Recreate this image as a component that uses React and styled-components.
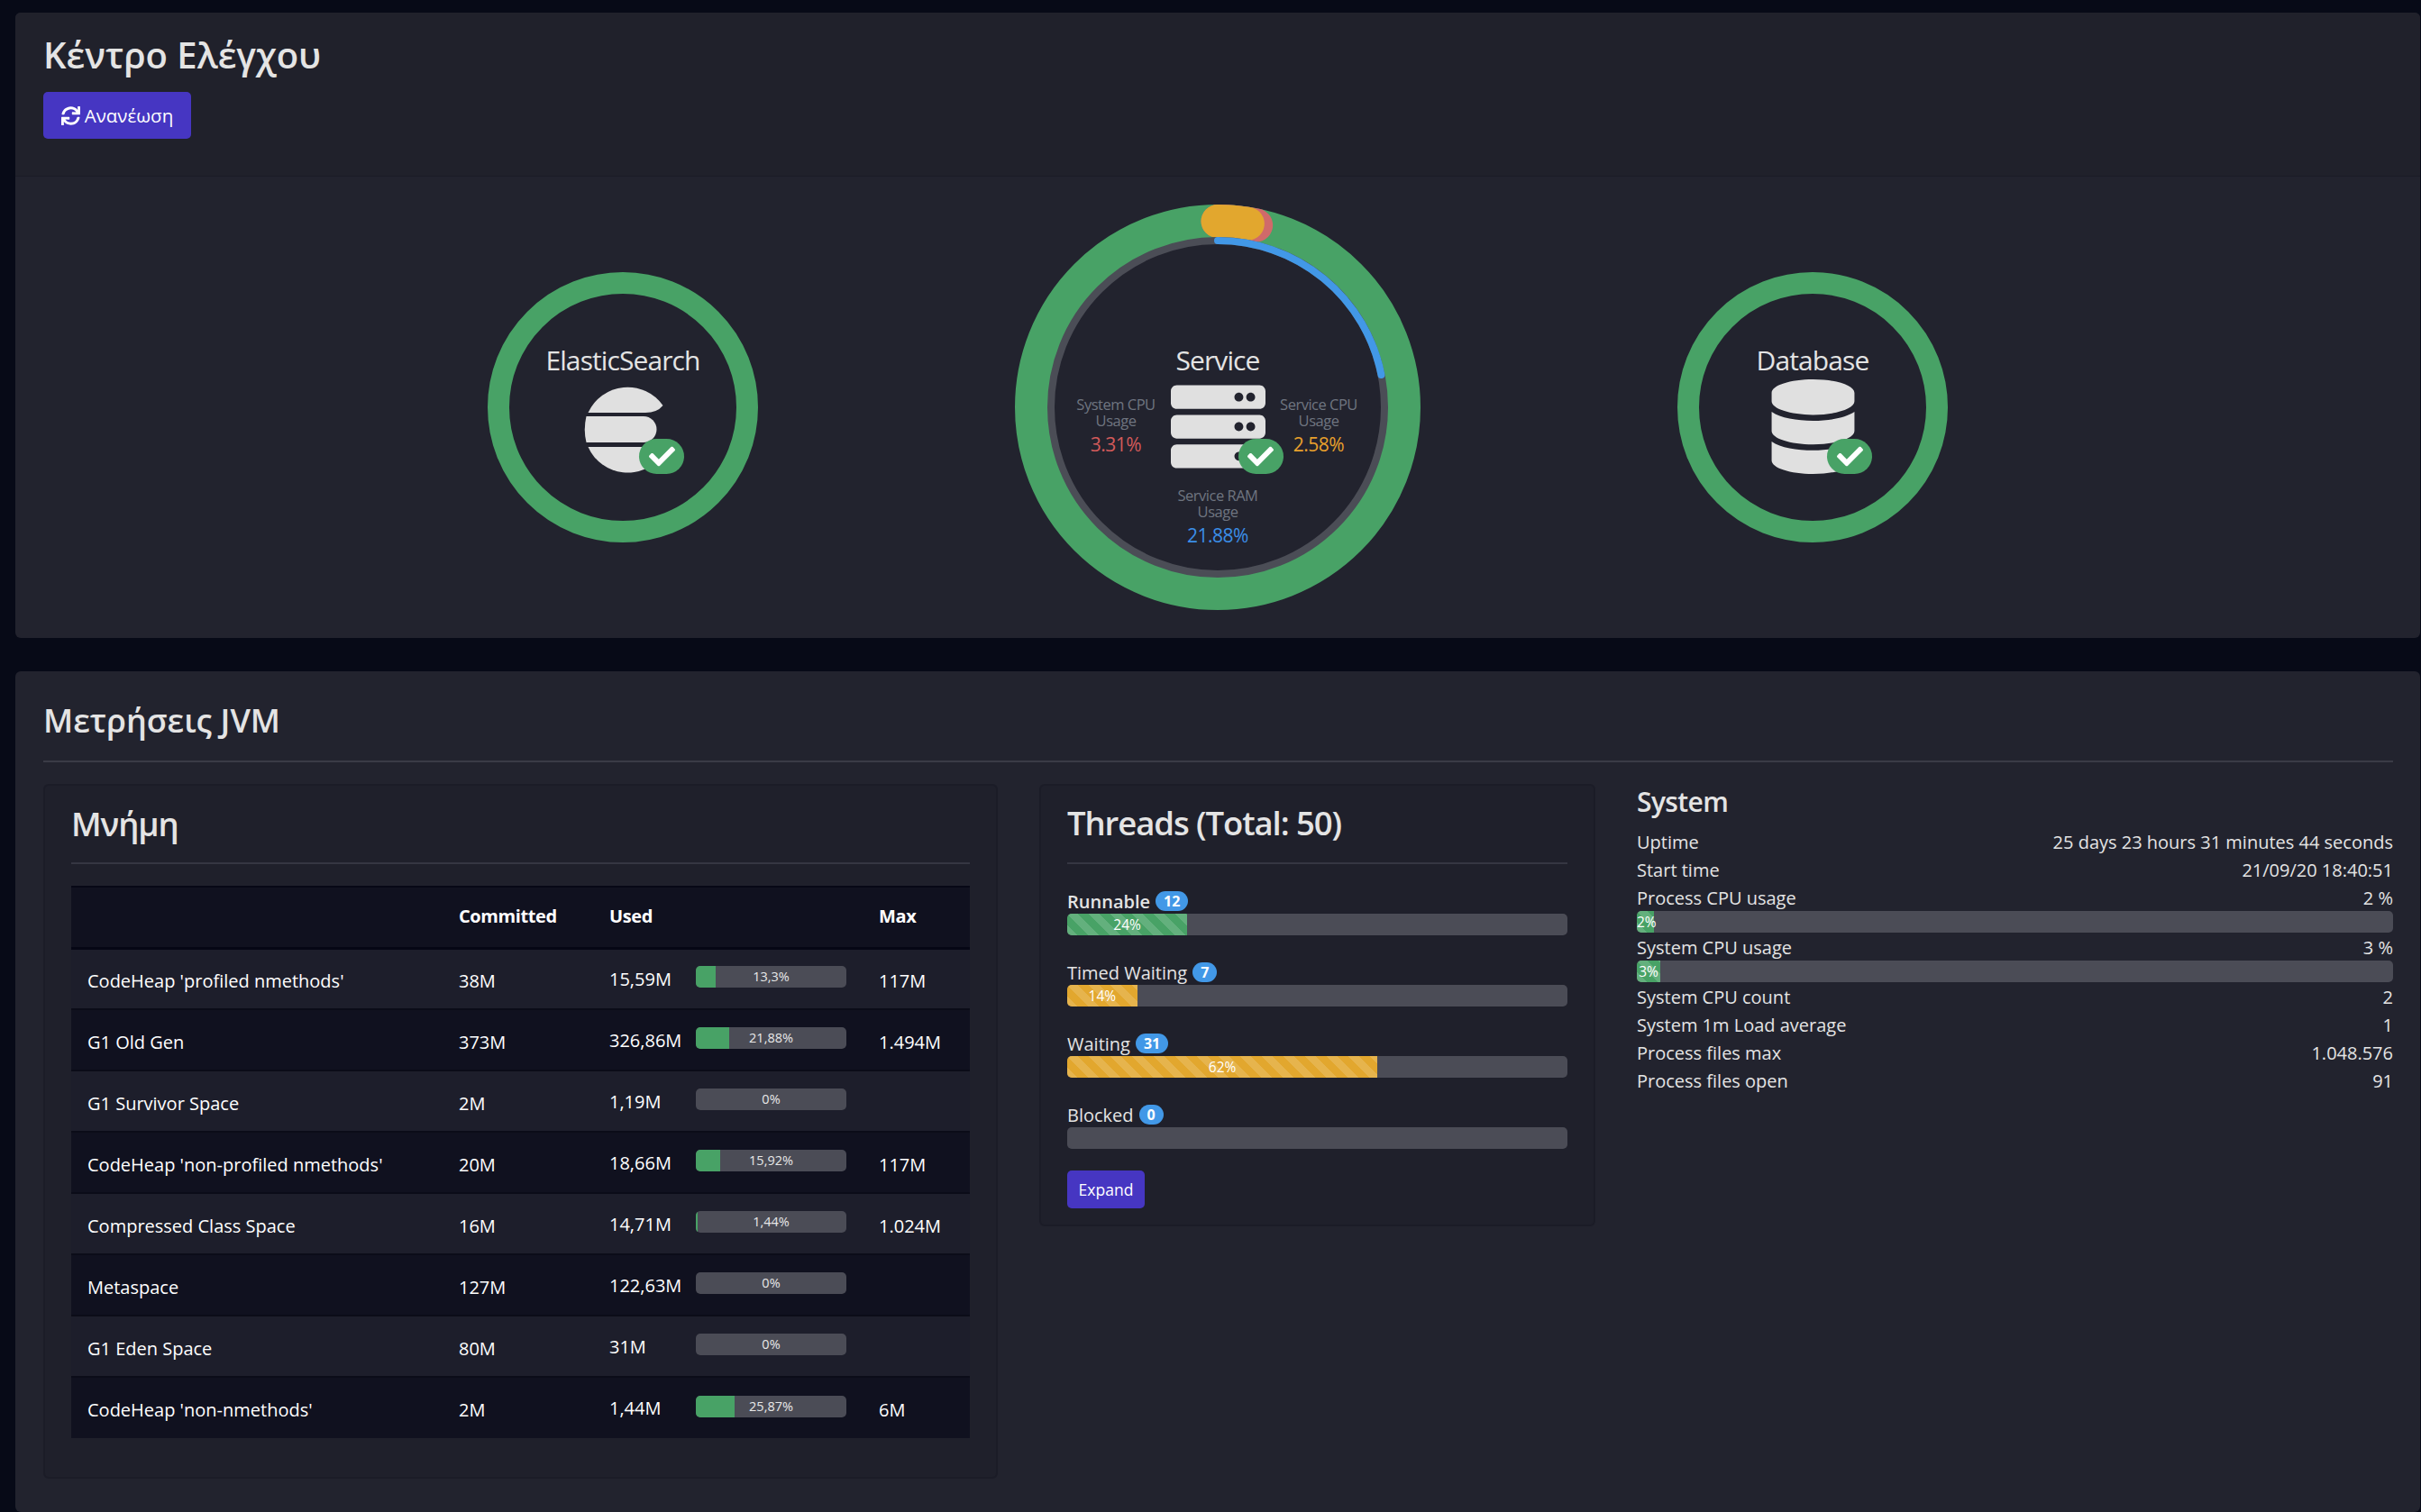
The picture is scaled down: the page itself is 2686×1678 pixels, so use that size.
import React from 'react';
import styled, { createGlobalStyle } from 'styled-components';
import { FaSync, FaServer, FaDatabase, FaCheck } from 'react-icons/fa';

const GREEN = '#48a266';
const ORANGE = '#e2a72e';
const BLUE = '#4298e7';

const GlobalStyle = createGlobalStyle`
  html, body { margin: 0; padding: 0; height: 100%; }
  body {
    background: #070a17;
    color: #e4e4e4;
    font-family: "Open Sans", "Noto Sans", sans-serif;
    font-size: 20px;
    overflow: hidden;
  }
  * { box-sizing: border-box; }
`;

const Page = styled.div`
  display: flex;
  flex-direction: column;
  gap: 37px;
  height: 100vh;
  padding: 14px 1px 0 17px;
`;

const Panel = styled.section`
  background: #22232e;
  border-radius: 6px;
  flex: ${(p) => (p.$grow ? '1' : 'none')};
  padding: ${(p) => p.$padding || '0'};
`;

const PanelHeader = styled.header`
  height: 182px;
  padding: 19px 31px 0;
  background: #20212b;
  border-bottom: 1px solid #1b1c26;
  border-radius: 6px 6px 0 0;
`;

const PageTitle = styled.h1`
  margin: 0 0 13px;
  font-size: 40px;
  line-height: 56px;
  font-weight: 600;
`;

const PrimaryButton = styled.button`
  display: inline-flex;
  align-items: center;
  justify-content: center;
  gap: ${(p) => p.$gap || 0}px;
  width: ${(p) => p.$w}px;
  height: ${(p) => p.$h}px;
  padding: 0;
  border: 0;
  border-radius: 5px;
  background: #4636c2;
  color: #fff;
  font-family: inherit;
  font-size: ${(p) => p.$size}px;
`;

const Rings = styled.div`
  display: flex;
  justify-content: center;
  align-items: center;
  gap: 285px;
  height: 512px;
`;

const Ring = styled.div`
  position: relative;
  width: ${(p) => p.$size}px;
  height: ${(p) => p.$size}px;
  flex: none;
`;

const RingSvg = styled.svg`
  display: block;
`;

const RingContent = styled.div`
  position: absolute;
  inset: 0;
  display: flex;
  flex-direction: column;
  align-items: center;
  justify-content: center;
  padding-top: 4px;
`;

const RingTitle = styled.div`
  font-size: 30px;
  line-height: 36px;
  letter-spacing: -0.03em;
  margin-bottom: 3px;
`;

const IconBox = styled.div`
  position: relative;
  height: 105px;
  color: #e0e0e0;
  svg { display: block; }
`;

const CheckBadge = styled.span`
  position: absolute;
  right: ${(p) => p.$right}px;
  bottom: 0;
  width: 50px;
  height: 39px;
  border-radius: 20px;
  background: ${GREEN};
  color: #fff;
  display: flex;
  align-items: center;
  justify-content: center;
  font-size: 29px;
`;

const Metric = styled.div`
  position: absolute;
  left: ${(p) => p.$left}px;
  top: ${(p) => p.$top}px;
  width: 120px;
  text-align: center;
  font-size: 16.5px;
  line-height: 18px;
  letter-spacing: -0.03em;
  color: #6f7580;
`;

const MetricValue = styled.div`
  margin-top: 5px;
  font-size: 21px;
  line-height: 24px;
  color: ${(p) => p.$color};
`;

const SectionTitle = styled.h2`
  margin: 0;
  padding-bottom: 19px;
  font-size: 36px;
  line-height: 50px;
  font-weight: 600;
  border-bottom: 2px solid #3a3b46;
`;

const Columns = styled.div`
  display: grid;
  grid-template-columns: 1059px 617px 1fr;
  gap: 46px;
  margin-top: 24px;
  align-items: start;
`;

const Card = styled.div`
  background: #1f202b;
  border: 2px solid #1b1c27;
  border-radius: 6px;
  padding: ${(p) => p.$padding};
`;

const CardTitle = styled.h3`
  margin: 0;
  padding-bottom: ${(p) => p.$gap}px;
  font-size: 36.5px;
  line-height: 56px;
  font-weight: 600;
  letter-spacing: -0.03em;
  border-bottom: 2px solid #353642;
`;

const Table = styled.table`
  width: 997px;
  margin-top: 24px;
  border-collapse: collapse;
  table-layout: fixed;
  color: #fff;
  border-top: 2px solid #070816;
`;

const Th = styled.th`
  height: 68px;
  padding: 0 0 2px 18px;
  width: ${(p) => p.$w}px;
  background: #10111f;
  border-bottom: 3px solid #060715;
  text-align: left;
  font-size: 20px;
  font-weight: 700;
  letter-spacing: -0.02em;
`;

const Tr = styled.tr`
  background: ${(p) => (p.$odd ? '#1d1e2b' : '#10111f')};
  border-bottom: 2px solid #0b0c18;
  &:last-child { border-bottom: 0; }
`;

const Td = styled.td`
  height: 68px;
  padding: 4px 0 0 18px;
  font-size: 20px;
  white-space: nowrap;
`;

const UsedCell = styled.div`
  display: flex;
  align-items: center;
  padding-bottom: 8px;
`;

const UsedValue = styled.span`
  width: 96px;
  flex: none;
  padding-top: 4px;
`;

const Track = styled.div`
  position: relative;
  display: flex;
  width: ${(p) => p.$w || '100%'};
  height: 24px;
  overflow: hidden;
  border-radius: 5px;
  background: #4b4c56;
`;

const MemoryFill = styled.div`
  position: absolute;
  top: 0;
  bottom: 0;
  left: 0;
  background: ${GREEN};
`;

const TrackLabel = styled.span`
  position: relative;
  flex: 1;
  text-align: center;
  font-size: 14.5px;
  line-height: 24px;
  color: #e8e8e8;
`;

const StripedFill = styled.div`
  height: 100%;
  text-align: center;
  font-size: 15.5px;
  line-height: 24px;
  color: #fff;
  background-color: ${(p) => p.$color};
  background-image: linear-gradient(45deg, rgba(255,255,255,.15) 25%, transparent 25%, transparent 50%, rgba(255,255,255,.15) 50%, rgba(255,255,255,.15) 75%, transparent 75%, transparent);
  background-size: 24px 24px;
`;

const ThreadRow = styled.div`
  margin-top: 27px;
`;

const ThreadLabel = styled.div`
  display: flex;
  align-items: center;
  gap: 6px;
  height: 28px;
  font-size: 20px;
  font-weight: ${(p) => (p.$bold ? 600 : 400)};
`;

const CountBadge = styled.span`
  height: 22px;
  min-width: 27px;
  padding: 0 9px;
  border-radius: 11px;
  background: ${BLUE};
  color: #fff;
  font-size: 16px;
  font-weight: 700;
  line-height: 23px;
  text-align: center;
`;

const ExpandRow = styled.div`
  margin-top: 24px;
`;

const SystemTitle = styled.h4`
  margin: 0 0 9px;
  font-size: 30px;
  line-height: 40px;
  font-weight: 600;
  letter-spacing: -0.02em;
`;

const SystemRow = styled.div`
  display: flex;
  justify-content: space-between;
  height: 31px;
  line-height: 31px;
  font-size: 20px;
`;

const SystemBar = styled.div`
  margin: -1.5px 0 1.5px;
`;

const Ring3 = ({ size, stroke }) => {
  const c = size / 2;
  return (
    <RingSvg width={size} height={size}>
      <circle cx={c} cy={c} r={c - stroke / 2} fill="none" stroke={GREEN} strokeWidth={stroke} />
    </RingSvg>
  );
};

const ServiceRing = () => {
  const arc = (r, pct) => {
    const a = (pct / 100) * 2 * Math.PI;
    return `M 225 ${225 - r} A ${r} ${r} 0 0 1 ${225 + r * Math.sin(a)} ${225 - r * Math.cos(a)}`;
  };
  return (
    <RingSvg width={450} height={450}>
      <circle cx={225} cy={225} r={206.5} fill="none" stroke={GREEN} strokeWidth={37} />
      <path d={arc(206.5, 3.31)} fill="none" stroke="#d06a6a" strokeWidth={37} strokeLinecap="round" />
      <path d={arc(206.5, 2.58)} fill="none" stroke={ORANGE} strokeWidth={37} strokeLinecap="round" />
      <circle cx={225} cy={225} r={185} fill="none" stroke="#4b4d56" strokeWidth={8} />
      <path d={arc(185, 21.88)} fill="none" stroke={BLUE} strokeWidth={8} strokeLinecap="round" />
    </RingSvg>
  );
};

const ElasticIcon = () => (
  <svg width="96" height="105" viewBox="12 2 96 105" fill="currentColor">
    <path d="M21.5 39 A48 48 0 0 1 104.5 31 Q98 39 85 39 Z" />
    <path d="M19.5 43 H83 A14.5 14.5 0 0 1 83 72 H19.5 Q16 57.5 19.5 43 Z" />
    <path d="M21.5 77 H82 Q96 77 104 86 A48 48 0 0 1 21.5 77 Z" />
  </svg>
);

const Badge = ({ right = -20 }) => (
  <CheckBadge $right={right}>
    <FaCheck />
  </CheckBadge>
);

const memory = [
  ["CodeHeap 'profiled nmethods'", '38M', '15,59M', 13.3, '13,3%', '117M'],
  ['G1 Old Gen', '373M', '326,86M', 21.88, '21,88%', '1.494M'],
  ['G1 Survivor Space', '2M', '1,19M', 0, '0%', ''],
  ["CodeHeap 'non-profiled nmethods'", '20M', '18,66M', 15.92, '15,92%', '117M'],
  ['Compressed Class Space', '16M', '14,71M', 1.44, '1,44%', '1.024M'],
  ['Metaspace', '127M', '122,63M', 0, '0%', ''],
  ['G1 Eden Space', '80M', '31M', 0, '0%', ''],
  ["CodeHeap 'non-nmethods'", '2M', '1,44M', 25.87, '25,87%', '6M'],
];

const threads = [
  { name: 'Runnable', count: 12, pct: 24, color: GREEN, bold: true },
  { name: 'Timed Waiting', count: 7, pct: 14, color: ORANGE },
  { name: 'Waiting', count: 31, pct: 62, color: ORANGE },
  { name: 'Blocked', count: 0, pct: 0, color: ORANGE },
];

const App = () => (
  <>
    <GlobalStyle />
    <Page>
      <Panel>
        <PanelHeader>
          <PageTitle>Κέντρο Ελέγχου</PageTitle>
          <PrimaryButton $w={164} $h={52} $size={20.5} $gap={5}>
            <FaSync size={21} />
            Ανανέωση
          </PrimaryButton>
        </PanelHeader>
        <Rings>
          <Ring $size={300}>
            <Ring3 size={300} stroke={24} />
            <RingContent>
              <RingTitle>ElasticSearch</RingTitle>
              <IconBox>
                <ElasticIcon />
                <Badge />
              </IconBox>
            </RingContent>
          </Ring>
          <Ring $size={450}>
            <ServiceRing />
            <RingContent>
              <RingTitle>Service</RingTitle>
              <IconBox>
                <FaServer size={105} />
                <Badge />
              </IconBox>
            </RingContent>
            <Metric $left={52} $top={213}>
              System CPU<br />Usage
              <MetricValue $color="#d25a5a">3.31%</MetricValue>
            </Metric>
            <Metric $left={277} $top={213}>
              Service CPU<br />Usage
              <MetricValue $color="#e8a02c">2.58%</MetricValue>
            </Metric>
            <Metric $left={165} $top={314}>
              Service RAM<br />Usage
              <MetricValue $color="#3b8ee8">21.88%</MetricValue>
            </Metric>
          </Ring>
          <Ring $size={300}>
            <Ring3 size={300} stroke={24} />
            <RingContent>
              <RingTitle>Database</RingTitle>
              <IconBox>
                <FaDatabase size={105} />
                <Badge right={-13.5} />
              </IconBox>
            </RingContent>
          </Ring>
        </Rings>
      </Panel>

      <Panel $grow $padding="30px 30px 0 31px">
        <SectionTitle>Μετρήσεις JVM</SectionTitle>
        <Columns>
          <Card $padding="14px 29px 43px 29px">
            <CardTitle $gap={15}>Μνήμη</CardTitle>
            <Table>
              <thead>
                <tr>
                  <Th $w={412} />
                  <Th $w={167}>Committed</Th>
                  <Th $w={299}>Used</Th>
                  <Th $w={119}>Max</Th>
                </tr>
              </thead>
              <tbody>
                {memory.map(([name, committed, used, pct, label, max], i) => (
                  <Tr key={name} $odd={i % 2 === 0}>
                    <Td>{name}</Td>
                    <Td>{committed}</Td>
                    <Td>
                      <UsedCell>
                        <UsedValue>{used}</UsedValue>
                        <Track $w="167px">
                          <MemoryFill style={{ width: `${pct}%` }} />
                          <TrackLabel>{label}</TrackLabel>
                        </Track>
                      </UsedCell>
                    </Td>
                    <Td>{max}</Td>
                  </Tr>
                ))}
              </tbody>
            </Table>
          </Card>

          <Card $padding="13px 29px 18px 29px">
            <CardTitle $gap={16}>Threads (Total: 50)</CardTitle>
            {threads.map((t) => (
              <ThreadRow key={t.name}>
                <ThreadLabel $bold={t.bold}>
                  {t.name} <CountBadge>{t.count}</CountBadge>
                </ThreadLabel>
                <Track>
                  {t.pct > 0 && (
                    <StripedFill $color={t.color} style={{ width: `${t.pct}%` }}>
                      {t.pct}%
                    </StripedFill>
                  )}
                </Track>
              </ThreadRow>
            ))}
            <ExpandRow>
              <PrimaryButton $w={86} $h={42} $size={17.5}>Expand</PrimaryButton>
            </ExpandRow>
          </Card>

          <div>
            <SystemTitle>System</SystemTitle>
            <SystemRow><span>Uptime</span><span>25 days 23 hours 31 minutes 44 seconds</span></SystemRow>
            <SystemRow><span>Start time</span><span>21/09/20 18:40:51</span></SystemRow>
            <SystemRow><span>Process CPU usage</span><span>2 %</span></SystemRow>
            <SystemBar>
              <Track>
                <StripedFill $color={GREEN} style={{ width: '2.3%' }}>2%</StripedFill>
              </Track>
            </SystemBar>
            <SystemRow><span>System CPU usage</span><span>3 %</span></SystemRow>
            <SystemBar>
              <Track>
                <StripedFill $color={GREEN} style={{ width: '3.1%' }}>3%</StripedFill>
              </Track>
            </SystemBar>
            <SystemRow><span>System CPU count</span><span>2</span></SystemRow>
            <SystemRow><span>System 1m Load average</span><span>1</span></SystemRow>
            <SystemRow><span>Process files max</span><span>1.048.576</span></SystemRow>
            <SystemRow><span>Process files open</span><span>91</span></SystemRow>
          </div>
        </Columns>
      </Panel>
    </Page>
  </>
);

export default App;
